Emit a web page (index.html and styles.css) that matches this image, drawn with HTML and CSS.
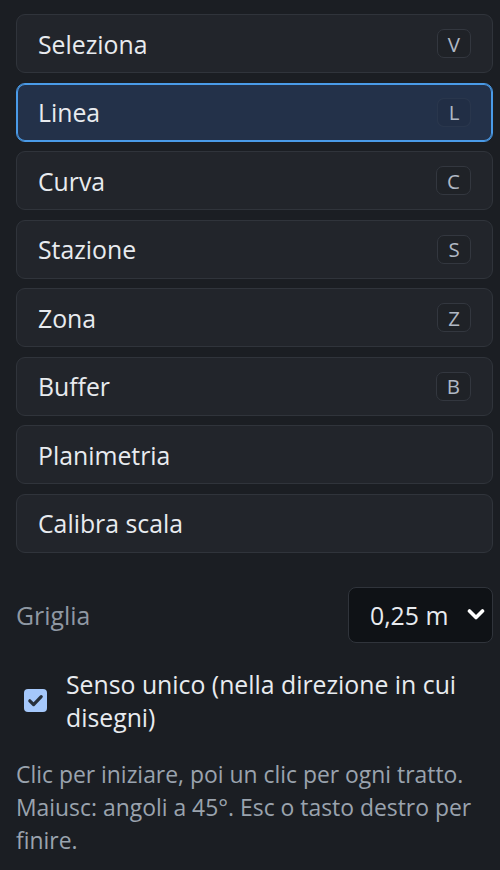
FILE: index.html
```html
<!DOCTYPE html>
<html lang="it">
<head>
<meta charset="utf-8">
<link rel="stylesheet" href="styles.css">
</head>
<body>
<div class="panel">
  <div class="tools">
    <button class="tool"><span class="name">Seleziona</span><span class="key">V</span></button>
    <button class="tool active"><span class="name">Linea</span><span class="key">L</span></button>
    <button class="tool"><span class="name">Curva</span><span class="key">C</span></button>
    <button class="tool"><span class="name">Stazione</span><span class="key">S</span></button>
    <button class="tool"><span class="name">Zona</span><span class="key">Z</span></button>
    <button class="tool"><span class="name">Buffer</span><span class="key">B</span></button>
    <button class="tool"><span class="name">Planimetria</span></button>
    <button class="tool"><span class="name">Calibra scala</span></button>
  </div>
  <div class="grid-row">
    <span class="label">Griglia</span>
    <div class="select">
      <span>0,25 m</span>
      <svg class="chev" width="18" height="13" viewBox="0 0 18 13"><path d="M2.5 3 9 9.5 15.5 3" fill="none" stroke="#ffffff" stroke-width="3.6" stroke-linecap="round" stroke-linejoin="round"/></svg>
    </div>
  </div>
  <label class="check">
    <span class="box"><svg width="23" height="23" viewBox="0 0 23 23"><path d="M5.8 11.8 9.6 15.6 17.2 7.6" fill="none" stroke="#27303b" stroke-width="3.2" stroke-linecap="round" stroke-linejoin="round"/></svg></span>
    <span class="check-text">Senso unico (nella direzione in cui disegni)</span>
  </label>
  <p class="help">Clic per iniziare, poi un clic per ogni tratto. Maiusc: angoli a 45°. Esc o tasto destro per finire.</p>
</div>
</body>
</html>
```
FILE: styles.css
```css
html, body {
  margin: 0;
  padding: 0;
  background: #1b1e23;
}
body {
  font-family: "Open Sans", "Noto Sans", sans-serif;
  color: #e6e9ee;
}
.panel {
  padding: 14px 7px 0 16px;
}
.tools {
  display: flex;
  flex-direction: column;
  gap: 9.5px;
}
.tool {
  display: flex;
  align-items: center;
  justify-content: space-between;
  height: 59px;
  padding: 0 21px 0 21px;
  background: #22252b;
  border: 1px solid #30343b;
  border-radius: 9px;
  font-family: inherit;
  font-size: 24.8px;
  color: #e8ebef;
  text-align: left;
}
.tool.active {
  background: #233149;
  border-color: #4a9be8;
  box-shadow: inset 0 0 0 1px #4a9be8;
}
.key {
  display: inline-flex;
  align-items: center;
  justify-content: center;
  min-width: 34px;
  height: 29px;
  box-sizing: border-box;
  padding: 0 10px;
  background: #1f2227;
  border: 1px solid #33373f;
  border-radius: 7px;
  font-size: 20.5px;
  color: #b0b8c4;
}
.tool.active .key {
  background: rgba(0, 0, 0, 0.05);
  border-color: rgba(255, 255, 255, 0.04);
}
.grid-row {
  display: flex;
  align-items: center;
  justify-content: space-between;
  margin-top: 34px;
}
.label {
  font-size: 24.8px;
  color: #8f98a3;
}
.select {
  display: flex;
  align-items: center;
  width: 145px;
  height: 56px;
  box-sizing: border-box;
  padding: 0 7px 0 21px;
  background: #0f1216;
  border: 1px solid #30343b;
  border-radius: 8px;
  font-size: 24.8px;
  color: #e8ebef;
}
.chev {
  margin-left: auto;
}
.check {
  display: flex;
  align-items: center;
  gap: 19px;
  margin-top: 25px;
  padding-left: 8px;
}
.box {
  flex: none;
  width: 23px;
  height: 23px;
  border-radius: 4px;
  background: #a5c8fb;
  display: flex;
  align-items: center;
  justify-content: center;
}
.check-text {
  font-size: 24.8px;
  line-height: 33px;
  color: #e8ebef;
}
.help {
  margin: 24px 0 0;
  font-size: 22.9px;
  line-height: 33px;
  color: #9aa3ae;
}
```
